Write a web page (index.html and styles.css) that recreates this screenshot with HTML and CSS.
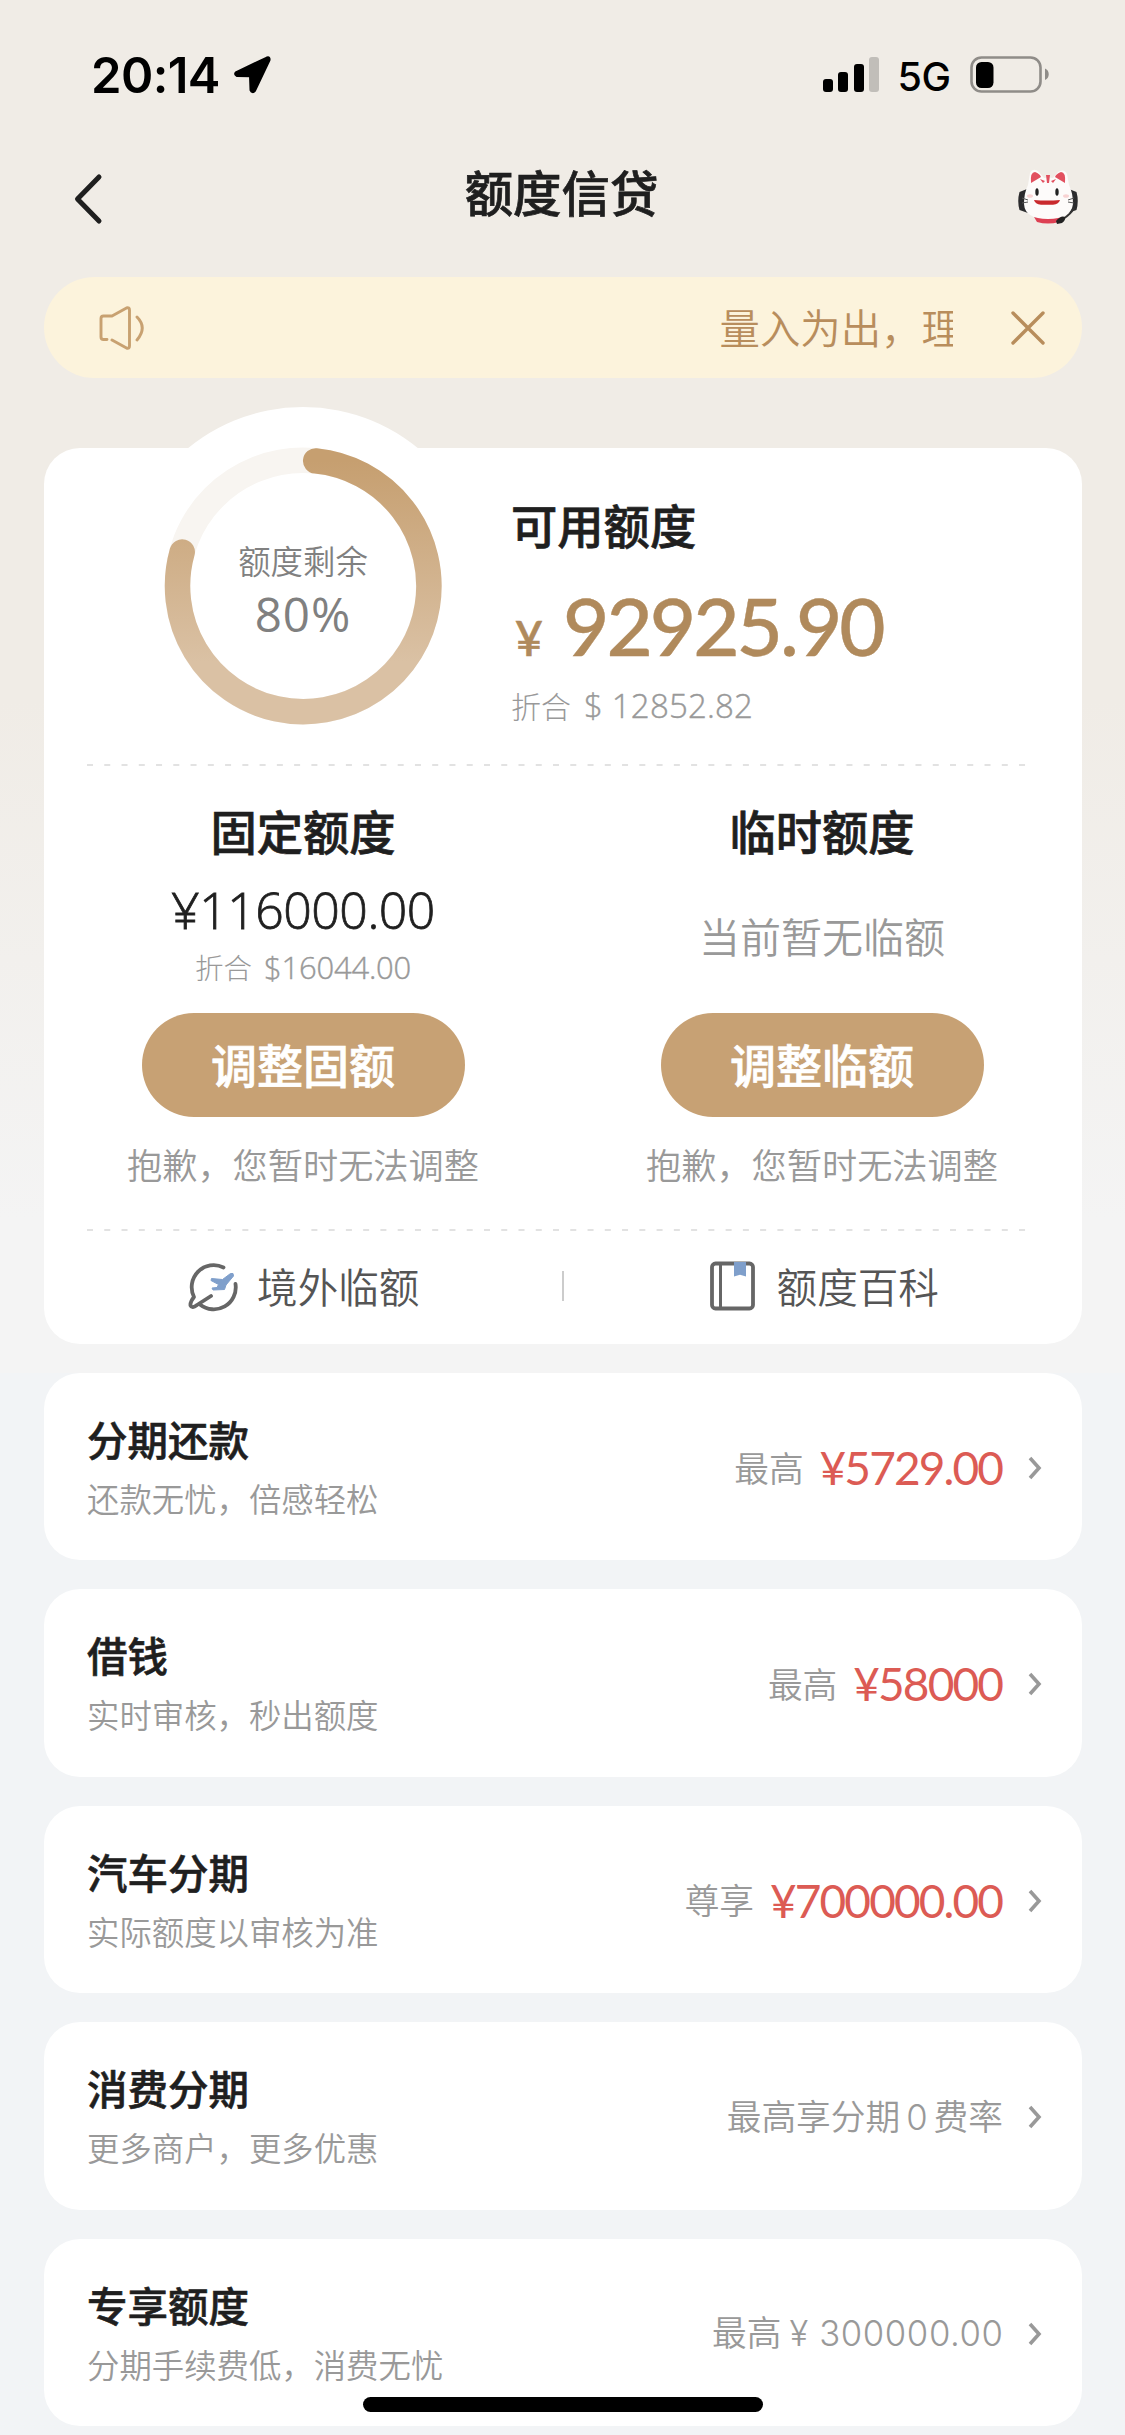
FILE: index.html
```html
<!DOCTYPE html>
<html lang="zh-CN">
<head>
<meta charset="utf-8">
<title>额度信贷</title>
<link rel="stylesheet" href="styles.css">
</head>
<body>
<div class="screen">
  <div class="status">
    <span class="time">20:14</span>
    <svg class="locate" width="40" height="40" viewBox="0 0 40 40"><path d="M35 3 4.500 17.500Q2.500 19 5 20.500L18.500 20.800 19 35Q20.500 38 22.500 35.500L37 5Q37.500 2 35 3Z" fill="#000" stroke="#000" stroke-width="3" stroke-linejoin="round"/></svg>
    <svg class="signal" width="56" height="35" viewBox="0 0 56 35"><rect x="0" y="22" width="10" height="13" rx="3"/><rect x="15" y="15" width="10" height="20" rx="3"/><rect x="31" y="7" width="10" height="28" rx="3"/><rect x="46" y="0" width="10" height="35" rx="3" fill="#c1beb9"/></svg>
    <span class="net">5G</span>
    <svg class="battery" width="80" height="37" viewBox="0 0 80 37"><rect x="1.500" y="1.500" width="69" height="34" rx="10" fill="none" stroke="#8f8c88" stroke-width="2.600"/><rect x="6" y="6" width="17.500" height="26" rx="5.500"/><path d="M75 12.500c5 2 5 9.500 0 11.500z" fill="#8f8c88"/></svg>
  </div>
  <header class="nav">
    <svg class="back" width="30" height="52" viewBox="0 0 30 52"><path d="M26 4 4.500 26 26 48" fill="none" stroke="#1f1f1f" stroke-width="5" stroke-linecap="round" stroke-linejoin="round"/></svg>
    <h1 class="nav-title">额度信贷</h1>
    <svg class="cat" width="62" height="56" viewBox="0 0 62 56">
      <path d="M10 20 2.500 23Q0 32 2.500 41L11 44ZM52 20l7.500 3q2.500 9 0 18l-8.500 3z" fill="#2b2b2d"/>
      <path d="M17 48h28l-3 5q-11 3-22 0z" fill="#dd4053"/>
      <path d="M11 16 13 4q3-6 9-1l5 6q5-1 9 0l5-6q6-4 9 2l2 11q4 8 4 19-2 15-25 15T7 35Q7 24 11 16Z" fill="#fdfbfa"/>
      <path d="M14 14q-1-11 4-11 5 2 6 5-5 3-10 6ZM48 14q1-11-4-11-5 2-6 5 5 3 10 6ZM29 6h4l-1 8h-2zM23 10l5 2-2 2zM39 10l-5 2 2 2z" fill="#e2505f"/>
      <ellipse cx="20" cy="23" rx="1.700" ry="3.800" fill="#222"/><ellipse cx="40" cy="23" rx="1.700" ry="3.800" fill="#222"/>
      <ellipse cx="13" cy="27" rx="3" ry="1.800" fill="#f8d3d3"/><ellipse cx="49" cy="27" rx="3" ry="1.800" fill="#f8d3d3"/>
      <path d="M17 31q13 1 26 0-1 4-7 4.800h-12q-6-.8-7-4.800z" fill="#c9292d"/>
      <path d="M5 29l6 2M5 34l6-1M57 29l-6 2M57 34l-6-1" stroke="#555" stroke-width="1"/>
      <path d="M57 39q-3 6-11 11" fill="none" stroke="#333" stroke-width="1.800"/><path d="M39 52q5-6 9-4 1 3-3 6l-5 1z" fill="#222"/>
    </svg>
  </header>

  <div class="notice">
    <svg class="speaker" width="48" height="48" viewBox="0 0 48 48"><path d="M9 35.500H5.500Q3 35.500 3 33V14.500Q3 12 5.500 12H14L28.500 4Q31.500 3 31.500 6V42Q31.500 45 28.500 44L14 36M39 13q10.500 10.500 0 23" fill="none" stroke="#c8a171" stroke-width="2.900" stroke-linecap="round" stroke-linejoin="round"/></svg>
    <div class="ticker">量入为出，理</div>
    <svg class="close" width="36" height="36" viewBox="0 0 36 36"><path d="M3 3 33 33M33 3 3 33" stroke="#b88d5c" stroke-width="3.400" stroke-linecap="round"/></svg>
  </div>

  <section class="card quota">
    <div class="overview">
      <div class="gauge">
        <svg class="ring" width="362" height="362" viewBox="0 0 362 362">
          <defs><linearGradient id="gold" x1="0" y1="0" x2="0" y2="1"><stop offset="0" stop-color="#c69f70"/><stop offset=".8" stop-color="#dac1a4"/><stop offset="1" stop-color="#dac1a4"/></linearGradient></defs>
          <circle cx="181" cy="181" r="181" fill="#fff"/>
          <circle cx="181" cy="179" r="125.700" fill="none" stroke="#f8f5f1" stroke-width="25.500"/>
          <path d="M193.700 53.900A125.700 125.700 0 1 1 60.200 145" fill="none" stroke="url(#gold)" stroke-width="25.500" stroke-linecap="round"/>
        </svg>
        <div class="gauge-text"><span class="gauge-label">额度剩余</span><span class="gauge-value">80%</span></div>
      </div>
      <div class="available">
        <h2 class="heading">可用额度</h2>
        <div class="total"><span class="yen">¥</span><span class="amount">92925.90</span></div>
        <div class="convert"><span class="cn">折合</span><span class="usd">$ 12852.82</span></div>
      </div>
    </div>
    <svg class="dashes" width="939" height="2" viewBox="0 0 939 2"><path d="M0 1H939" stroke="#e2e2e2" stroke-width="2" stroke-dasharray="6 11.260"/></svg>
    <div class="limits">
      <div class="limit">
        <h2 class="heading">固定额度</h2>
        <div class="fixed">¥116000.00</div>
        <div class="convert small"><span class="cn">折合</span><span class="usd">$16044.00</span></div>
        <button class="adjust">调整固额</button>
        <p class="sorry">抱歉，您暂时无法调整</p>
      </div>
      <div class="limit">
        <h2 class="heading">临时额度</h2>
        <div class="none">当前暂无临额</div>
        <button class="adjust">调整临额</button>
        <p class="sorry">抱歉，您暂时无法调整</p>
      </div>
    </div>
    <svg class="dashes" width="939" height="2" viewBox="0 0 939 2"><path d="M0 1H939" stroke="#e2e2e2" stroke-width="2" stroke-dasharray="6 11.260"/></svg>
    <div class="links">
      <a class="link"><svg width="52" height="52" viewBox="0 0 52 52"><path d="M37.500 7.500A22 22 0 0 0 8 37Q4 42 4.500 45.500 6 49 11 45L25 36M14 44.500A22 22 0 0 0 49.500 24" fill="none" stroke="#666" stroke-width="3.800" stroke-linecap="round" stroke-linejoin="round"/><path d="M47 13.500 44.500 13.500 36.500 19.500 25.500 18.500 25 20.500 32.500 24.500 31 27.500 26 28 27 30 38.500 29.500 40 25 47.500 16Z" fill="#7f9fcb" stroke="#7f9fcb" stroke-width="1" stroke-linejoin="round"/></svg>境外临额</a>
      <span class="divider"></span>
      <a class="link"><svg width="52" height="52" viewBox="0 0 52 52"><rect x="6" y="3.500" width="41" height="45" rx="3.500" fill="none" stroke="#666" stroke-width="3.800"/><path d="M14.500 4V48" stroke="#666" stroke-width="3"/><path d="M28 2H40V16.500L34 14.800 28 16.500Z" fill="#7f9fcb"/></svg>额度百科</a>
    </div>
  </section>

  <section class="card item">
    <div><h3 class="item-title">分期还款</h3><p class="item-sub">还款无忧，倍感轻松</p></div>
    <div class="item-side"><span class="tag">最高</span><span class="price">¥5729.00</span><svg class="chev" width="18" height="28" viewBox="0 0 18 28"><path d="M4 4 13 14 4 24" /></svg></div>
  </section>
  <section class="card item">
    <div><h3 class="item-title">借钱</h3><p class="item-sub">实时审核，秒出额度</p></div>
    <div class="item-side"><span class="tag">最高</span><span class="price">¥58000</span><svg class="chev" width="18" height="28" viewBox="0 0 18 28"><path d="M4 4 13 14 4 24" /></svg></div>
  </section>
  <section class="card item">
    <div><h3 class="item-title">汽车分期</h3><p class="item-sub">实际额度以审核为准</p></div>
    <div class="item-side"><span class="tag">尊享</span><span class="price">¥700000.00</span><svg class="chev" width="18" height="28" viewBox="0 0 18 28"><path d="M4 4 13 14 4 24" /></svg></div>
  </section>
  <section class="card item">
    <div><h3 class="item-title">消费分期</h3><p class="item-sub">更多商户，更多优惠</p></div>
    <div class="item-side"><span class="tag plain">最高享分期<span class="digit zero">0</span>费率</span><svg class="chev" width="18" height="28" viewBox="0 0 18 28"><path d="M4 4 13 14 4 24" /></svg></div>
  </section>
  <section class="card item">
    <div><h3 class="item-title">专享额度</h3><p class="item-sub">分期手续费低，消费无忧</p></div>
    <div class="item-side"><span class="tag plain">最高<span class="digit money">¥ 300000.00</span></span><svg class="chev" width="18" height="28" viewBox="0 0 18 28"><path d="M4 4 13 14 4 24" /></svg></div>
  </section>
  <div class="home"></div>
</div>
</body>
</html>
```
FILE: styles.css
```css
* { box-sizing: border-box; margin: 0; padding: 0; }
body { font-family: "Noto Sans CJK SC", sans-serif; color: #1f1f1f; background: #f2f4f6; }
.screen {
  position: relative; width: 1125px; height: 2435px; overflow: hidden; padding: 0 43.5px;
  display: flex; flex-direction: column;
  background: linear-gradient(#f0ece6 0, #f0ece6 700px, #f4f4f4 1220px, #f4f4f4 1373px, #f2f4f6 1373px);
}
svg { display: block; flex: none; }
.status { height: 150px; padding: 50px 32px 0 47.5px; display: flex; align-items: flex-start; color: #000; }
.time { font: 600 49px/51px Inter, sans-serif; letter-spacing: -0.6px; width: 140.5px; white-space: nowrap; }
.locate { margin-top: 5px; }
.signal { margin: 7px 19px 0 auto; }
.net { font: 500 39.5px/54px Inter, sans-serif; width: 56px; margin-right: 16px; letter-spacing: -0.4px; }
.battery { margin-top: 6px; }
.nav { height: 127px; padding: 18px 0 0 29px; display: flex; justify-content: space-between; align-items: flex-start; }
.back { margin-top: 5px; }
.nav-title { font-size: 48.4px; line-height: 54px; font-weight: 500; margin: -4px 0 0 4px; -webkit-text-stroke: 0.7px; }
.cat { margin: 1px 3px 0 0; }
.notice { height: 101px; border-radius: 51px; background: #fcf3dc; padding: 0 35px 0 54px; display: flex; align-items: center; }
.ticker { margin-left: 574px; width: 233px; overflow: hidden; white-space: nowrap; font-size: 40.4px; font-weight: 350; color: #b88d5c; flex: none; line-height: 60px; padding-bottom: 2px; }
.close { margin-left: 57px; }
.card { background: #fff; border-radius: 36px; flex: none; }
.quota { margin-top: 70px; height: 896px; padding: 0 43.5px; }
.overview { height: 316px; display: flex; }
.gauge { width: 362px; height: 362px; margin: -41px 0 0 35px; display: grid; flex: none; }
.ring, .gauge-text { grid-area: 1 / 1; }
.gauge-text { display: flex; flex-direction: column; align-items: center; padding-top: 129px; color: #808080; }
.gauge-label { font-size: 32.4px; line-height: 48px; font-weight: 350; }
.gauge-value { font: 400 47.5px/60px "Open Sans", sans-serif; letter-spacing: 1px; }
.available { padding: 48px 0 0 27px; }
.heading { font-size: 46.3px; line-height: 56px; font-weight: 500; white-space: nowrap; -webkit-text-stroke: 0.7px; }
.total { display: flex; align-items: baseline; height: 98px; line-height: 98px; color: #b08a5c; padding-left: 4px; margin-top: 24px; font-family: Lato, sans-serif; }
.yen { width: 48px; font-size: 48px; font-weight: 500; -webkit-text-stroke: 0.6px; }
.amount { font-size: 80px; font-weight: 500; letter-spacing: -3px; -webkit-text-stroke: 0.4px; }
.convert { display: flex; align-items: baseline; gap: 13px; color: #999; line-height: 50px; margin-top: 6px; }
.cn { font-size: 30px; font-weight: 300; }
.usd { font-family: "Open Sans", sans-serif; font-weight: 300; font-size: 33px; letter-spacing: 0.2px; white-space: pre; -webkit-text-stroke: 0.4px; }
.limits { display: grid; grid-template-columns: 519px 519px; margin: 0 -43.5px; height: 463px; }
.limit { display: flex; flex-direction: column; align-items: center; padding-top: 36px; }
.fixed { font: 300 50px/66px "Open Sans", sans-serif; letter-spacing: -0.5px; margin-top: 19px; -webkit-text-stroke: 0.8px; }
.convert.small { height: 40px; line-height: 40px; margin-top: 4px; margin-bottom: 26px; gap: 12px; }
.small .cn { font-size: 28.5px; }
.small .usd { font-size: 31px; letter-spacing: -0.2px; }
.none { font-size: 41px; line-height: 60px; font-weight: 350; color: #999; margin: 47px 0 48px; }
.adjust { width: 323px; height: 104px; border: 0; border-radius: 52px; background: #c7a174; color: #fff; font: 500 46px/100px "Noto Sans CJK SC", sans-serif; padding-bottom: 4px; flex: none; -webkit-text-stroke: 0.7px; }
.sorry { font-size: 35.2px; line-height: 52px; font-weight: 350; color: #999; margin-top: 21px; }
.links { display: grid; grid-template-columns: 1fr 1px 1fr; align-items: center; margin: 0 -43.5px; height: 110px; }
.link { display: flex; align-items: center; justify-content: center; gap: 19px; font-size: 40.6px; font-weight: 350; line-height: 56px; color: #555; }
.divider { width: 2px; height: 30px; background: #ccc; }
.item { margin-top: 29px; height: 187.4px; padding: 38px 37.5px 0 43.5px; display: flex; justify-content: space-between; }
.item-title { font-size: 40.5px; line-height: 56px; font-weight: 500; -webkit-text-stroke: 0.6px; }
.item-sub { font-size: 32.4px; line-height: 46px; font-weight: 350; color: #999; margin-top: 8px; }
.item-side { display: flex; align-items: center; height: 114px; }
.tag { font-size: 34.7px; line-height: 50px; font-weight: 350; color: #999; white-space: nowrap; padding-bottom: 3px; }
.price { font-family: Lato, sans-serif; font-size: 46px; line-height: 60px; color: #dc5b54; letter-spacing: -1.9px; margin: 0 1px 0 16px; }
.chev { margin-left: 23px; fill: none; stroke: #999; stroke-width: 3.6; }
.digit { font-family: Inter, sans-serif; font-weight: 300; }
.zero { margin: 0 6px; }
.money { margin-left: 8px; letter-spacing: 0.6px; margin-right: -0.6px; }
.home { position: absolute; left: 363px; top: 2397px; width: 400px; height: 15px; border-radius: 8px; background: #000; }
```
